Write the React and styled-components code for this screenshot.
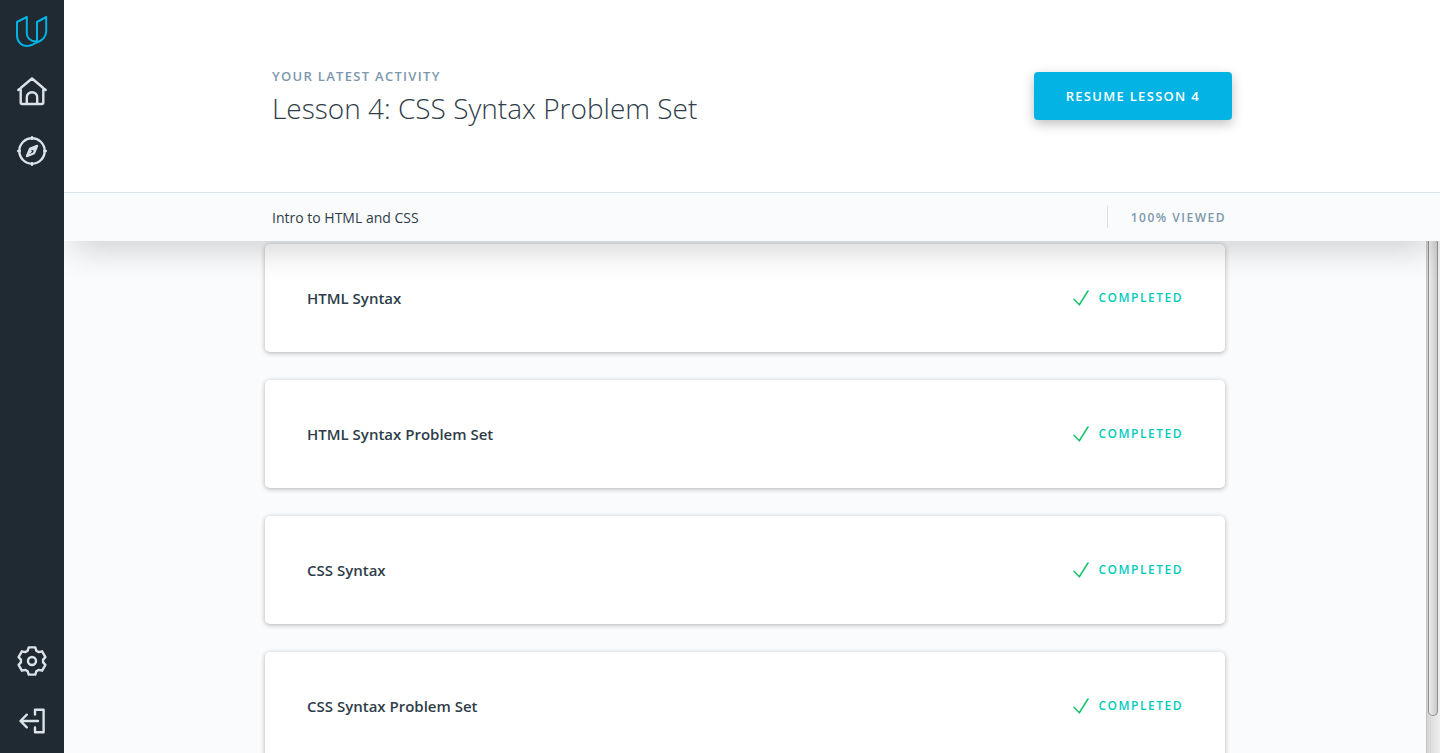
import React from "react";
import styled, { createGlobalStyle } from "styled-components";

const GlobalStyle = createGlobalStyle`
  *, *::before, *::after { box-sizing: border-box; }
  body {
    margin: 0;
    background: #fafbfc;
    color: #2e3d49;
    font-family: "Open Sans", sans-serif;
  }
  h1, h2, p, ul { margin: 0; padding: 0; }
`;

const Shell = styled.div`
  display: flex;
  height: 100vh;
  overflow: hidden;
`;

const Sidebar = styled.nav`
  position: relative;
  z-index: 2;
  flex: none;
  display: flex;
  flex-direction: column;
  justify-content: space-between;
  width: 64px;
  padding: 2px 0;
  background: #1f2a32;
`;

const NavGroup = styled.div`
  display: flex;
  flex-direction: column;
`;

const NavLink = styled.a`
  display: flex;
  align-items: center;
  justify-content: center;
  height: 60px;
  color: ${(p) => (p.$brand ? "#02b3e4" : "#dbe2e8")};
`;

const Icon = styled.svg`
  display: block;
  width: 32px;
  height: 32px;
  fill: none;
  stroke: currentColor;
  stroke-width: ${(p) => p.$weight || 2.4};
  stroke-linecap: round;
  stroke-linejoin: round;
`;

const Main = styled.main`
  flex: 1;
  min-width: 0;
  display: flex;
  flex-direction: column;
`;

const Top = styled.div`
  position: relative;
  z-index: 1;
  flex: none;
  box-shadow: 0 20px 30px -10px rgba(0, 0, 0, 0.16);
`;

const Centered = styled.div`
  display: flex;
  align-items: center;
  justify-content: space-between;
  width: 100%;
  max-width: 960px;
  margin: 0 auto;
`;

const Hero = styled.header`
  display: flex;
  align-items: center;
  height: 192px;
  background: #fff;
`;

const Activity = styled.div`
  display: flex;
  flex-direction: column;
  gap: 8px;
`;

const Eyebrow = styled.p`
  color: #7d97ad;
  font-size: 13px;
  font-weight: 600;
  line-height: 16px;
  letter-spacing: 0.1em;
  text-transform: uppercase;
`;

const Title = styled.h1`
  font-size: 28px;
  font-weight: 300;
  line-height: 32px;
`;

const ResumeButton = styled.button`
  height: 48px;
  padding: 0 32px;
  border: 0;
  border-radius: 4px;
  background: #02b3e4;
  box-shadow: 0 4px 12px rgba(0, 0, 0, 0.25);
  color: #fff;
  font: 600 13px/20px "Open Sans", sans-serif;
  letter-spacing: 0.1em;
  text-transform: uppercase;
  cursor: pointer;
`;

const CourseBar = styled.div`
  display: flex;
  height: 49px;
  border-top: 1px solid #dbe2e8;
  background: #fafbfc;
`;

const CourseName = styled.h2`
  padding-top: 2px;
  font-size: 14px;
  font-weight: 400;
  line-height: 24px;
`;

const Viewed = styled.p`
  padding: 2px 6px 0 23px;
  border-left: 1px solid #dbe2e8;
  color: #7d97ad;
  font-size: 12px;
  font-weight: 600;
  line-height: 20px;
  letter-spacing: 0.125em;
  text-transform: uppercase;
`;

const Body = styled.div`
  flex: 1;
  min-height: 0;
  display: flex;
`;

const LessonList = styled.ul`
  flex: 1;
  display: flex;
  flex-direction: column;
  align-items: center;
  gap: 28px;
  overflow: hidden;
  list-style: none;

  && { padding-top: 3px; }
`;

const Lesson = styled.li`
  flex: none;
  width: 100%;
  max-width: 960px;
`;

const LessonCard = styled.a`
  display: flex;
  align-items: center;
  justify-content: space-between;
  height: 108px;
  padding: 0 42px;
  border-radius: 5px;
  background: #fff;
  box-shadow: 0 1px 5px rgba(0, 0, 0, 0.3);
  color: inherit;
  text-decoration: none;
`;

const LessonName = styled.span`
  font-size: 15px;
  font-weight: 600;
  line-height: 24px;
`;

const Status = styled.span`
  display: flex;
  align-items: center;
  gap: 9px;
  color: #02ccba;
  font-size: 12px;
  font-weight: 600;
  line-height: 20px;
  letter-spacing: 0.125em;
  text-transform: uppercase;
`;

const Check = styled.svg`
  width: 17px;
  height: 16px;
  fill: none;
  stroke: #1fc36c;
  stroke-width: 1.6;
  stroke-linecap: round;
  stroke-linejoin: round;
`;

const ScrollTrack = styled.div`
  flex: none;
  width: 14px;
  padding: 0 2px 37px 1px;
  border-left: 1px solid #c4c4c4;
  background: linear-gradient(90deg, #d4d4d4, #efefef);
`;

const ScrollThumb = styled.div`
  height: 100%;
  border: 1px solid #8f8f8f;
  border-top: 0;
  border-radius: 0 0 5px 5px;
  background: linear-gradient(90deg, #ececec, #c9c9c9);
`;

const lessons = [
  "HTML Syntax",
  "HTML Syntax Problem Set",
  "CSS Syntax",
  "CSS Syntax Problem Set",
];

export default function App() {
  return (
    <>
      <GlobalStyle />
      <Shell>
        <Sidebar aria-label="Main">
          <NavGroup>
            <NavLink href="#" $brand aria-label="Udacity">
              <Icon viewBox="0 0 32 32" $weight={2}>
                <path d="M1 6 10.800 1v16c0 5 3.600 8.300 9.400 8.600M1 6v13C1 26 5.400 30 11.500 30c2.800 0 5.300-1 8-3C26.500 24.800 30.200 21.500 30.200 15V1L21 6v18.700c0 .900-.500 1.600-1.500 2.300" />
              </Icon>
            </NavLink>
            <NavLink href="#" aria-label="Home">
              <Icon viewBox="0 0 32 32">
                <path d="M2.300 14 16 2.500 29.700 14M4.700 12v14.500c0 1 .500 1.500 1.500 1.500h19.600c1 0 1.500-.500 1.500-1.500V12M10.800 28v-6.600a5.200 5.200 0 0 1 10.400 0V28" />
              </Icon>
            </NavLink>
            <NavLink href="#" aria-label="Explore">
              <Icon viewBox="0 0 32 32">
                <circle cx="16" cy="15" r="12.700" />
                <path d="M16 1.200v1.500M16 27.300v1.500M2.200 15h1.500M28.300 15h1.500" />
                <path d="m21.200 9.800-3 7.400-7.400 3 3-7.400z" strokeWidth="2" />
                <path d="m21 10-6.800 3-3.200 7 5-4.200-1-2 2.800.600-.800 2.800 1 0z" fill="currentColor" stroke="none" />
              </Icon>
            </NavLink>
          </NavGroup>
          <NavGroup>
            <NavLink href="#" aria-label="Settings">
              <Icon viewBox="0 0 32 32">
                <path d="M12.700 2.400H19.300L20.300 5.700 22.800 7.100 26.100 6.300 29.400 12.100 27.100 14.600V17.400L29.400 19.900 26.100 25.700 22.800 24.900 20.300 26.300 19.300 29.600H12.700L11.700 26.300 9.200 24.900 5.900 25.700 2.600 19.900 4.900 17.400V14.600L2.600 12.100 5.900 6.300 9.200 7.100 11.700 5.700Z" />
                <circle cx="16" cy="16" r="4" />
              </Icon>
            </NavLink>
            <NavLink href="#" aria-label="Sign out">
              <Icon viewBox="0 0 32 32">
                <path d="M4.500 16H22M10.800 9.700 4.500 16l6.300 6.300M19 9.500V4.700h8.600v22.600H19v-4.800" />
              </Icon>
            </NavLink>
          </NavGroup>
        </Sidebar>
        <Main>
          <Top>
            <Hero>
              <Centered>
                <Activity>
                  <Eyebrow>Your latest activity</Eyebrow>
                  <Title>Lesson 4: CSS Syntax Problem Set</Title>
                </Activity>
                <ResumeButton type="button">Resume Lesson 4</ResumeButton>
              </Centered>
            </Hero>
            <CourseBar>
              <Centered>
                <CourseName>Intro to HTML and CSS</CourseName>
                <Viewed>100% viewed</Viewed>
              </Centered>
            </CourseBar>
          </Top>
          <Body>
            <LessonList>
              {lessons.map((name) => (
                <Lesson key={name}>
                  <LessonCard href="#">
                    <LessonName>{name}</LessonName>
                    <Status>
                      <Check viewBox="0 0 17 16" aria-hidden="true">
                        <path d="m1 9.300 5.300 5.500L15 1" />
                      </Check>
                      Completed
                    </Status>
                  </LessonCard>
                </Lesson>
              ))}
            </LessonList>
            <ScrollTrack aria-hidden="true">
              <ScrollThumb />
            </ScrollTrack>
          </Body>
        </Main>
      </Shell>
    </>
  );
}
